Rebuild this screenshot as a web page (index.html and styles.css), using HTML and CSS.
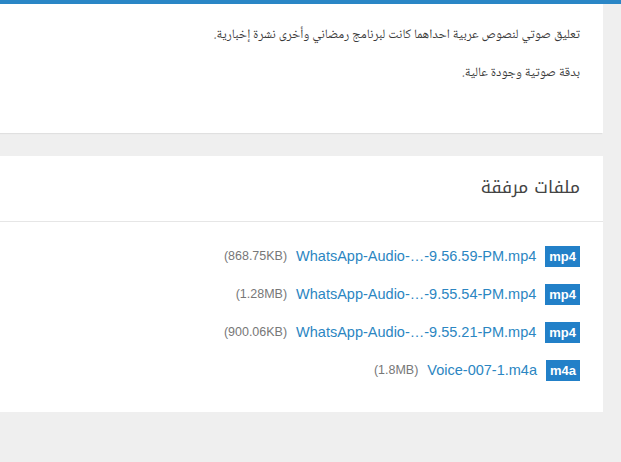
FILE: index.html
```html
<!DOCTYPE html>
<html lang="ar" dir="rtl">
<head>
<meta charset="utf-8" />
<link rel="stylesheet" href="styles.css">
</head>
<body>
<div class="topbar"></div>
<div class="page">
  <div class="card intro">
    <p>تعليق صوتي لنصوص عربية احداهما كانت لبرنامج رمضاني وأخرى نشرة إخبارية.</p>
    <p>بدقة صوتية وجودة عالية.</p>
  </div>

  <div class="card files">
    <h3 class="files-title">ملفات مرفقة</h3>
    <ul class="file-list">
      <li class="file">
        <span class="badge">mp4</span>
        <a href="#" class="file-name" dir="ltr">WhatsApp-Audio-…-9.56.59-PM.mp4</a>
        <span class="file-size" dir="ltr">(868.75KB)</span>
      </li>
      <li class="file">
        <span class="badge">mp4</span>
        <a href="#" class="file-name" dir="ltr">WhatsApp-Audio-…-9.55.54-PM.mp4</a>
        <span class="file-size" dir="ltr">(1.28MB)</span>
      </li>
      <li class="file">
        <span class="badge">mp4</span>
        <a href="#" class="file-name" dir="ltr">WhatsApp-Audio-…-9.55.21-PM.mp4</a>
        <span class="file-size" dir="ltr">(900.06KB)</span>
      </li>
      <li class="file">
        <span class="badge">m4a</span>
        <a href="#" class="file-name" dir="ltr">Voice-007-1.m4a</a>
        <span class="file-size" dir="ltr">(1.8MB)</span>
      </li>
    </ul>
  </div>
</div>
</body>
</html>
```

FILE: styles.css
```css
body {
  margin: 0;
  background: #efefef;
  font-family: "Noto Naskh Arabic", "Noto Sans Arabic", "DejaVu Sans", sans-serif;
  color: #444;
}
.topbar {
  height: 4px;
  background: #2a86c6;
}
.page {
  padding-right: 18px;
}
.card {
  background: #fff;
  box-shadow: -1px 1px 1px rgba(0, 0, 0, .06);
}
.intro {
  height: 129px;
  box-sizing: border-box;
  padding: 19px 23px 0 23px;
  margin-bottom: 23px;
}
.intro p {
  margin: 0 0 14px 0;
  font-size: 13px;
  line-height: 24px;
  color: #3a3a3a;
}
.files-title {
  margin: 0;
  padding: 19px 23px 20px 23px;
  font-family: "Noto Kufi Arabic", "Noto Sans Arabic", sans-serif;
  font-size: 17.5px;
  line-height: 26px;
  font-weight: normal;
  border-bottom: 1px solid #e6e6e6;
}
.file-list {
  list-style: none;
  margin: 0;
  padding: 23px 23px 31px 23px;
}
.file {
  display: flex;
  align-items: center;
  gap: 9px;
  height: 22px;
  margin-bottom: 16px;
  font-family: "Liberation Sans", Arial, sans-serif;
}
.file:last-child {
  margin-bottom: 0;
}
.badge {
  background: #2280c8;
  color: #fff;
  font-size: 13px;
  font-weight: bold;
  line-height: 21px;
  padding: 0 4px;
}
.file-name {
  color: #2b86c2;
  text-decoration: none;
  font-size: 14.5px;
}
.file-size {
  color: #777;
  font-size: 12.5px;
}
```
